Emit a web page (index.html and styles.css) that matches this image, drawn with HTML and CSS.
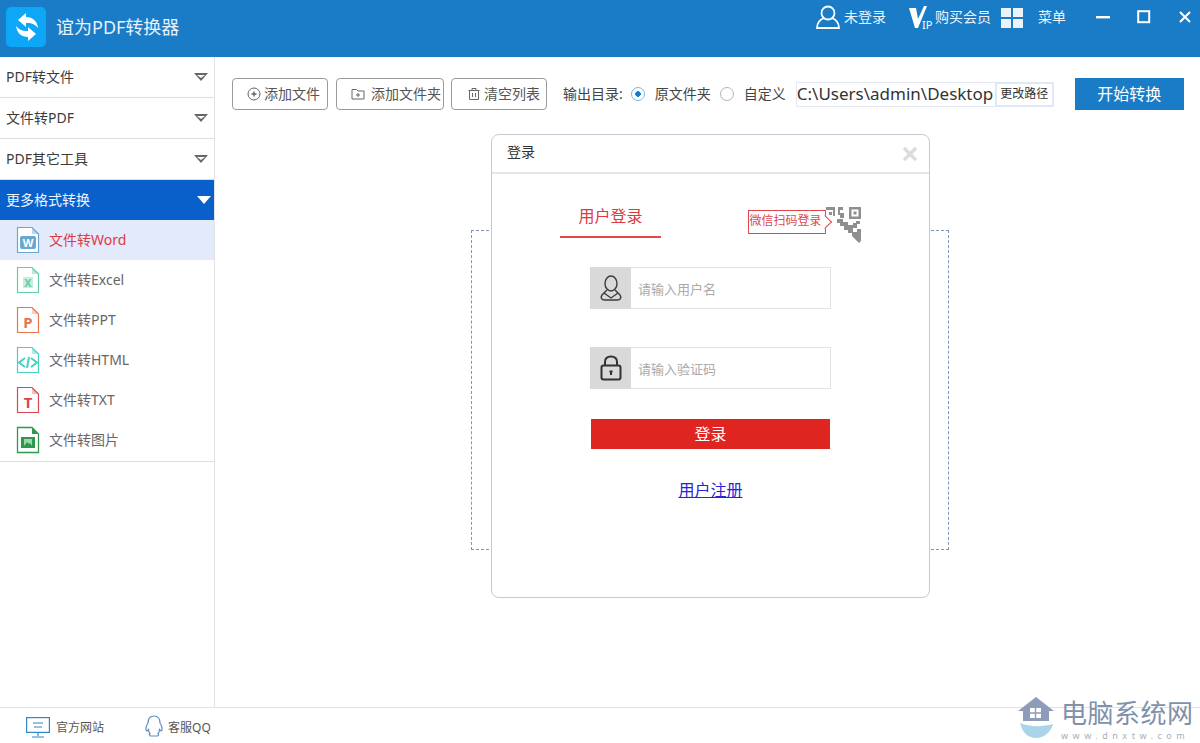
FILE: index.html
```html
<!DOCTYPE html>
<html lang="zh-CN">

<head>
    <meta charset="UTF-8" />
    <title>谊为PDF转换器</title>
    <link rel="stylesheet" href="styles.css">
</head>

<body>
    <header class="topbar">
        <div class="logo">
            <svg width="40" height="40" viewBox="0 0 40 40">
                <path d="M12 13 L20 6 V10 C27 10 31 14 32 21 C29 17 25 15.500 20 16 V20 Z" fill="#fff" />
                <path d="M12 13 L20 6 V10 C27 10 31 14 32 21 C29 17 25 15.500 20 16 V20 Z" fill="#fff" transform="rotate(180 21 20)" />
            </svg>
        </div>
        <div class="app-title">谊为PDF转换器</div>
        <div class="top-actions">
            <svg class="ico-user" width="26" height="26" viewBox="0 0 26 26" fill="none" stroke="#fff" stroke-width="1.8">
                <circle cx="13" cy="9" r="6.500" />
                <path d="M9 14 C4 16 2 20 2 24 H24 C24 20 22 16 17 14" />
            </svg>
            <span class="top-link login-link">未登录</span>
            <svg class="ico-vip" width="24" height="26" viewBox="0 0 24 26">
                <path d="M0 4 H7 L9 15 L15 2 H18 L9 24 H6 Z" fill="#fff" />
                <text x="13" y="25" class="vip-text">IP</text>
            </svg>
            <span class="top-link buy-link">购买会员</span>
            <div class="grid-icon"><i></i><i></i><i></i><i></i></div>
            <span class="top-link menu-link">菜单</span>
            <div class="win-btns">
                <svg width="14" height="14" viewBox="0 0 14 14"><rect x="0" y="6" width="14" height="2.400" fill="#fff" /></svg>
                <svg width="14" height="14" viewBox="0 0 14 14"><rect x="1.200" y="1.200" width="11" height="11" fill="none" stroke="#fff" stroke-width="2" /></svg>
                <svg width="14" height="14" viewBox="0 0 14 14"><path d="M2 2 L12 12 M12 2 L2 12" stroke="#fff" stroke-width="2" /></svg>
            </div>
        </div>
    </header>

    <div class="layout">
        <aside class="sidebar">
            <div class="group"><span>PDF转文件</span><span class="arrow"></span></div>
            <div class="group"><span>文件转PDF</span><span class="arrow"></span></div>
            <div class="group"><span>PDF其它工具</span><span class="arrow"></span></div>
            <div class="group group-open"><span>更多格式转换</span><span class="arrow"></span></div>
            <ul class="sub-list">
                <li class="sub-item active">
                    <svg class="file-ico" width="24" height="28" viewBox="0 0 24 28" style="color:#6aa8cf">
                        <path d="M1.500 1.500 H16 L22.500 8 V26.500 H1.500 Z" fill="#fff" stroke="currentColor" stroke-width="1.200" />
                        <path d="M16 1.500 L22.500 8 H16 Z" fill="currentColor" opacity=".45" />
                        <rect x="4" y="10" width="16" height="13" rx="2" fill="currentColor" />
                        <text x="12" y="21" class="file-letter">W</text>
                    </svg>
                    <span>文件转Word</span>
                </li>
                <li class="sub-item">
                    <svg class="file-ico" width="24" height="28" viewBox="0 0 24 28" style="color:#62cfa4">
                        <path d="M1.500 1.500 H16 L22.500 8 V26.500 H1.500 Z" fill="#fff" stroke="currentColor" stroke-width="1.200" />
                        <path d="M16 1.500 L22.500 8 H16 Z" fill="currentColor" opacity=".45" />
                        <rect x="7" y="11" width="10" height="11" fill="currentColor" opacity=".35" />
                        <text x="12" y="21" class="file-letter dark-letter">X</text>
                    </svg>
                    <span>文件转Excel</span>
                </li>
                <li class="sub-item">
                    <svg class="file-ico" width="24" height="28" viewBox="0 0 24 28" style="color:#e8764a">
                        <path d="M1.500 1.500 H16 L22.500 8 V26.500 H1.500 Z" fill="#fff" stroke="currentColor" stroke-width="1.200" />
                        <path d="M16 1.500 L22.500 8 H16 Z" fill="currentColor" opacity=".35" />
                        <text x="12" y="22" class="file-letter dark-letter big-letter">P</text>
                    </svg>
                    <span>文件转PPT</span>
                </li>
                <li class="sub-item">
                    <svg class="file-ico" width="24" height="28" viewBox="0 0 24 28" style="color:#45d2c0">
                        <path d="M1.500 1.500 H16 L22.500 8 V26.500 H1.500 Z" fill="#fff" stroke="currentColor" stroke-width="1.200" />
                        <path d="M16 1.500 L22.500 8 H16 Z" fill="currentColor" opacity=".45" />
                        <path d="M9 12 L3 16.500 L9 21 M15 12 L21 16.500 L15 21 M13 11 L11 22" fill="none" stroke="currentColor" stroke-width="2" />
                    </svg>
                    <span>文件转HTML</span>
                </li>
                <li class="sub-item">
                    <svg class="file-ico" width="24" height="28" viewBox="0 0 24 28" style="color:#d9474f">
                        <path d="M1.500 1.500 H16 L22.500 8 V26.500 H1.500 Z" fill="#fff" stroke="currentColor" stroke-width="1.200" />
                        <path d="M16 1.500 L22.500 8 H16 Z" fill="currentColor" opacity=".35" />
                        <text x="12" y="22" class="file-letter dark-letter big-letter">T</text>
                    </svg>
                    <span>文件转TXT</span>
                </li>
                <li class="sub-item">
                    <svg class="file-ico" width="24" height="28" viewBox="0 0 24 28" style="color:#2b9a4c">
                        <path d="M1.500 1.500 H16 L22.500 8 V26.500 H1.500 Z" fill="#fff" stroke="currentColor" stroke-width="1.300" />
                        <path d="M16 1.500 L22.500 8 H16 Z" fill="currentColor" />
                        <rect x="5" y="11" width="14" height="11" fill="currentColor" />
                        <rect x="8" y="13" width="8" height="7" fill="#9fd6ae" />
                        <path d="M8 20 L11 16 L13 18 L14 17 L16 20 Z" fill="#2b9a4c" />
                    </svg>
                    <span>文件转图片</span>
                </li>
            </ul>
        </aside>

        <main class="content">
            <div class="toolbar">
                <button class="tool-btn btn-file">
                    <svg width="14" height="14" viewBox="0 0 14 14" fill="none" stroke="#666">
                        <circle cx="7" cy="7" r="6" />
                        <path d="M4.500 7 H9.500 M7 4.500 V9.500" stroke-width="1.400" />
                    </svg>
                    <span>添加文件</span>
                </button>
                <button class="tool-btn btn-folder">
                    <svg width="14" height="14" viewBox="0 0 14 14" fill="none" stroke="#666">
                        <path d="M1 2.500 H5.500 L7 4 H13 V12 H1 Z" />
                        <path d="M5 8 H9 M7 6 V10" />
                    </svg>
                    <span>添加文件夹</span>
                </button>
                <button class="tool-btn btn-clear">
                    <svg width="14" height="14" viewBox="0 0 14 14" fill="none" stroke="#666">
                        <path d="M1.500 3.500 H12.500 M5 3.500 V1.500 H9 V3.500 M2.500 3.500 V12.500 H11.500 V3.500 M5.500 6 V10 M8.500 6 V10" />
                    </svg>
                    <span>清空列表</span>
                </button>
                <span class="out-label">输出目录:</span>
                <span class="radio radio-on"></span>
                <span class="radio-text">原文件夹</span>
                <span class="radio"></span>
                <span class="radio-text">自定义</span>
                <div class="path-box">C:\Users\admin\Desktop</div>
                <button class="path-btn">更改路径</button>
                <button class="start-btn">开始转换</button>
            </div>

            <div class="drop-zone"></div>

            <div class="dialog">
                <div class="dialog-head">
                    <span class="dialog-title">登录</span>
                    <svg width="16" height="16" viewBox="0 0 16 16"><path d="M2 2 L14 14 M14 2 L2 14" stroke="#dcdcdc" stroke-width="3.400" /></svg>
                </div>
                <div class="tabs">
                    <div class="tab-user">用户登录</div>
                    <div class="tab-wechat">
                        <span class="wechat-tip">微信扫码登录</span>
                        <svg class="qr" width="36" height="38" viewBox="0 0 36 38" fill="#8f8f8f">
                            <path d="M0 1 H9 V10 H7 V4 H0 Z" />
                            <path d="M3 6 H6 V9 H3 Z" />
                            <path d="M12 1 H17 V4 H14 V7 H18 V12 H14 V9 H12 Z" />
                            <path d="M23 1 H35 V13 H23 Z M25.500 3.500 V10.500 H32.500 V3.500 Z M27.500 5.500 H30.500 V8.500 H27.500 Z" fill-rule="evenodd" />
                            <path d="M11 13 H17 V16 H22 V19 H27 V17 H30 V15 H34 V18 H31 V22 H27 V26 H31 V23 H35 V35 L33 37 L26 30 V27 H22 V24 H18 V20 H14 V17 H11 Z" />
                        </svg>
                    </div>
                </div>
                <div class="field">
                    <div class="field-ico">
                        <svg width="24" height="26" viewBox="0 0 24 26" fill="none" stroke="#3c3c3c" stroke-width="1.400">
                            <ellipse cx="12" cy="8.500" rx="6" ry="7.500" />
                            <path d="M8 15 L3 20 C1 23 3 25 5.500 25 H18.500 C21 25 23 23 21 20 L16 15 M5 18 L12 23 L19 18" />
                        </svg>
                    </div>
                    <span class="placeholder">请输入用户名</span>
                </div>
                <div class="field">
                    <div class="field-ico">
                        <svg width="22" height="26" viewBox="0 0 22 26" fill="none" stroke="#333" stroke-width="2">
                            <path d="M5 11 V7 C5 3.500 7.500 1.500 11 1.500 C14.500 1.500 17 3.500 17 7 V11" />
                            <rect x="1.500" y="10.500" width="19" height="14" rx="2" />
                            <path d="M11 15.500 V20 M9.500 16.500 H12.500" />
                        </svg>
                    </div>
                    <span class="placeholder">请输入验证码</span>
                </div>
                <button class="login-btn">登录</button>
                <a class="reg-link" href="#">用户注册</a>
            </div>

            <div class="watermark">
                <svg class="mark-house" width="36" height="42" viewBox="0 0 36 42">
                    <path d="M18 0 L36 14 H31 V24 C24 24 12 24 5 24 V14 H0 Z" fill="#8d9cb8" />
                    <rect x="12" y="11" width="11" height="10" fill="#fff" />
                    <path d="M17.500 11 V21 M12 16 H23" stroke="#8d9cb8" stroke-width="1.400" />
                    <path d="M2 26 C12 30 24 30 35 27 C33 35 26 41 18 41 C10 41 4 35 2 26 Z" fill="#a9d4ea" />
                </svg>
                <div class="mark-text">
                    <div class="mark-cn">电脑系统网</div>
                    <div class="mark-url">www.dnxtw.com</div>
                </div>
            </div>
        </main>
    </div>

    <footer class="footer">
        <svg class="ico-site" width="24" height="21" viewBox="0 0 24 21" fill="none" stroke="#2f86c9" stroke-width="1.200">
            <rect x="0.600" y="0.600" width="22.800" height="14.800" />
            <path d="M7 6 H17 M8 10 H16 M12 15 V19 M6 20 H18" />
        </svg>
        <span class="foot-text site-text">官方网站</span>
        <svg class="ico-qq" width="18" height="22" viewBox="0 0 18 22" fill="none" stroke="#5d8fc4" stroke-width="1.200">
            <path d="M9 1 C13 1 15 4 15 8 C17 11 17.500 14 16.500 16 C15.500 16 15 15 14.500 14.500 C14.500 16.500 14 17.500 13 18.500 C14 19 14 21 12 21 H6 C4 21 4 19 5 18.500 C4 17.500 3.500 16.500 3.500 14.500 C3 15 2.500 16 1.500 16 C0.500 14 1 11 3 8 C3 4 5 1 9 1 Z" />
        </svg>
        <span class="foot-text qq-text">客服QQ</span>
    </footer>
</body>

</html>
```

FILE: styles.css
```css
* {
    margin: 0;
    padding: 0;
    box-sizing: border-box;
    font-family: 'Noto Sans', 'Noto Sans CJK SC', sans-serif;
}

body {
    width: 1200px;
    height: 743px;
    display: flex;
    flex-direction: column;
    overflow: hidden;
    background: #fff;
    color: #444;
}

button {
    background: #fff;
    cursor: pointer;
}

/* top bar */
.topbar {
    height: 57px;
    flex: none;
    display: flex;
    background: #1a7cc7;
    color: #fff;
}

.logo {
    width: 40px;
    height: 40px;
    margin: 7px 0 0 6px;
    border-radius: 5px;
    background: #0ea6f7;
}

.app-title {
    margin: 14px 0 0 10px;
    font-size: 18px;
    line-height: 27px;
    color: #e6f1fa;
}

.top-actions {
    margin-left: auto;
    display: flex;
    align-items: flex-start;
}

.ico-user {
    margin: 4px 3px 0 0;
}

.top-link {
    font-size: 14px;
    line-height: 20px;
    margin-top: 7px;
    color: #eaf3fb;
}

.ico-vip {
    margin: 4px 2px 0 23px;
}

.vip-text {
    font-size: 11px;
    fill: #fff;
}

.grid-icon {
    display: grid;
    grid-template-columns: 10px 10px;
    grid-auto-rows: 9px;
    gap: 2px;
    margin: 8px 0 0 10px;
}

.grid-icon i {
    background: #eaf3fb;
}

.menu-link {
    margin-left: 15px;
}

.win-btns {
    display: flex;
    gap: 27px;
    margin: 10px 8px 0 30px;
}

/* layout */
.layout {
    flex: 1;
    display: flex;
    min-height: 0;
}

.sidebar {
    width: 215px;
    flex: none;
    border-right: 1px solid #e2e2e2;
}

.group {
    height: 41px;
    padding: 0 6px;
    display: flex;
    align-items: center;
    justify-content: space-between;
    font-size: 14px;
    color: #3c3c3c;
    border-bottom: 1px solid #dedede;
}

.group span:first-child {
    margin-bottom: 2px;
}

.arrow {
    width: 0;
    height: 0;
    border-left: 7.500px solid transparent;
    border-right: 7.500px solid transparent;
    border-top: 8px solid #666;
    position: relative;
}

.arrow::after {
    content: "";
    position: absolute;
    left: -4px;
    top: -6px;
    border-left: 4px solid transparent;
    border-right: 4px solid transparent;
    border-top: 3px solid #fff;
}

.group-open {
    height: 40px;
    background: #0a60cb;
    color: #f2f6fc;
    border-bottom: none;
}

.group-open .arrow {
    margin-right: -3px;
    border-top-color: #fff;
}

.group-open .arrow::after {
    display: none;
}

.sub-list {
    list-style: none;
    padding-bottom: 1px;
    border-bottom: 1px solid #dedede;
}

.sub-item {
    height: 40px;
    padding-left: 16px;
    display: flex;
    align-items: center;
    gap: 9px;
    font-size: 14px;
    color: #666;
}

.sub-item span {
    margin-bottom: 2px;
}

.sub-item.active {
    background: #e2eafb;
    color: #de3a40;
}

.file-letter {
    font-size: 11px;
    font-weight: 700;
    text-anchor: middle;
    fill: #fff;
}

.dark-letter {
    fill: currentColor;
}

.big-letter {
    font-size: 15px;
}

/* main area */
.content {
    flex: 1;
    position: relative;
    padding: 21px 0 0 17px;
}

.toolbar {
    display: flex;
    align-items: center;
    height: 32px;
    font-size: 14px;
    color: #444;
}

.tool-btn {
    height: 32px;
    display: flex;
    align-items: center;
    gap: 3px;
    padding-left: 14px;
    border: 1px solid #9a9a9a;
    border-radius: 4px;
    font-size: 14px;
    color: #555;
}

.tool-btn span {
    margin-bottom: 3px;
}

.btn-file {
    width: 96px;
}

.btn-folder {
    width: 108px;
    margin-left: 8px;
    gap: 6px;
}

.btn-clear {
    width: 96px;
    margin-left: 7px;
    padding-left: 15px;
}

.out-label,
.radio-text {
    margin-bottom: 3px;
    white-space: nowrap;
}

.out-label {
    margin-left: 16px;
}

.radio {
    width: 14px;
    height: 14px;
    margin-left: 9px;
    border: 1px solid #b5b5b5;
    border-radius: 50%;
    background: #fff;
}

.radio-on {
    margin-left: 8px;
    border-color: #7db5e2;
    background: radial-gradient(circle, #1b78c8 0 2.500px, #fff 3px);
}

.radio-text {
    margin-left: 10px;
}

.path-box {
    width: 199px;
    height: 25px;
    margin-left: 10px;
    border: 1px solid #e3e8f2;
    border-right: none;
    font-size: 17px;
    line-height: 22px;
    color: #333;
    white-space: nowrap;
}

.path-btn {
    width: 59px;
    height: 25px;
    padding-bottom: 2px;
    border: 2px solid #dfe8f8;
    font-size: 12px;
    color: #333;
}

.start-btn {
    width: 109px;
    height: 32px;
    margin-left: 21px;
    padding-bottom: 2px;
    border: none;
    background: #1a7cc7;
    color: #fff;
    font-size: 16px;
}

/* dashed area behind the dialog */
.drop-zone {
    position: absolute;
    left: 256px;
    top: 173px;
    width: 478px;
    height: 320px;
    border: 1px dashed #7f95b5;
}

/* login dialog */
.dialog {
    position: absolute;
    left: 276px;
    top: 77px;
    width: 439px;
    height: 464px;
    display: flex;
    flex-direction: column;
    align-items: center;
    background: #fff;
    border: 1px solid #c6cad2;
    border-radius: 8px;
}

.dialog-head {
    width: 100%;
    height: 39px;
    flex: none;
    padding: 0 11px 0 15px;
    display: flex;
    align-items: center;
    justify-content: space-between;
    border-bottom: 2px solid #e6e6e6;
    font-size: 14px;
    color: #333;
}

.dialog-title {
    margin-bottom: 6px;
}

.tabs {
    width: 100%;
    height: 93px;
    flex: none;
    position: relative;
}

.tab-user {
    position: absolute;
    left: 68px;
    top: 30px;
    width: 101px;
    height: 34px;
    border-bottom: 2px solid #e2474c;
    text-align: center;
    font-size: 16px;
    line-height: 24px;
    color: #dc3a3f;
}

.tab-wechat {
    position: absolute;
    left: 256px;
    top: 32px;
    display: flex;
    align-items: flex-start;
}

.wechat-tip {
    position: relative;
    width: 78px;
    height: 24px;
    margin-top: 4px;
    padding-right: 3px;
    border: 1px solid #e0474c;
    text-align: center;
    font-size: 12px;
    line-height: 20px;
    color: #dc4a4f;
    white-space: nowrap;
}

.wechat-tip::after {
    content: "";
    position: absolute;
    right: -5px;
    top: 6px;
    width: 9px;
    height: 9px;
    background: #fff;
    border-top: 1px solid #e0474c;
    border-right: 1px solid #e0474c;
    transform: rotate(45deg);
}

.field {
    width: 241px;
    height: 42px;
    flex: none;
    margin-bottom: 38px;
    display: flex;
    align-items: center;
    border: 1px solid #e2e2e2;
}

.field-ico {
    width: 41px;
    height: 42px;
    margin-left: -1px;
    display: flex;
    align-items: center;
    justify-content: center;
    background: #d9d9d9;
}

.placeholder {
    margin-left: 7px;
    font-size: 13px;
    color: #aaa;
}

.login-btn {
    width: 239px;
    height: 30px;
    flex: none;
    margin-top: -8px;
    padding-bottom: 2px;
    border: none;
    background: #df2520;
    color: #fff;
    font-size: 16px;
}

.reg-link {
    margin-top: 30px;
    font-size: 16px;
    line-height: 22px;
    color: #2a22d8;
}

/* footer */
.footer {
    height: 36px;
    flex: none;
    display: flex;
    align-items: center;
    border-top: 1px solid #e2e2e2;
    position: relative;
}

.ico-site {
    margin: 4px 0 0 26px;
}

.foot-text {
    margin: 2px 0 0 6px;
    font-size: 12px;
    color: #555;
}

.site-text {
    margin-right: 41px;
}

.qq-text {
    margin-left: 5px;
}

/* site watermark over the corner */
.watermark {
    position: absolute;
    left: 803px;
    top: 640px;
    z-index: 2;
    display: flex;
    gap: 7px;
}

.mark-text {
    width: 133px;
}

.mark-cn {
    margin-top: 1px;
    font-size: 26px;
    line-height: 30px;
    letter-spacing: .5px;
    color: #7f91ab;
    white-space: nowrap;
}

.mark-url {
    margin-top: 2px;
    font-size: 9px;
    line-height: 12px;
    letter-spacing: 4.500px;
    color: #a4afc0;
    white-space: nowrap;
}
```
